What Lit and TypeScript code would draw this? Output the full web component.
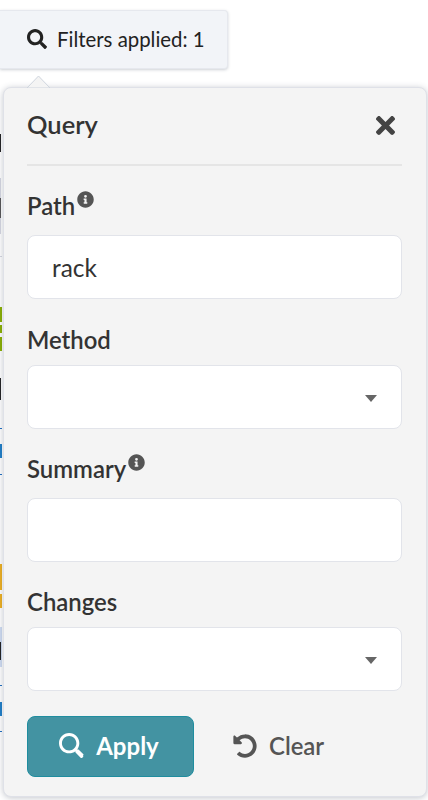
import { LitElement, html, css, svg } from "lit";
import { customElement } from "lit/decorators.js";

const strip: [number, number, string, number][] = [
  [134, 18, "#222", 1],
  [178, 56, "#d5d7e0", 1],
  [198, 20, "#555", 1],
  [256, 1, "#d5d7e0", 2],
  [307, 15, "#8ab000", 2],
  [325, 8, "#8ab000", 2],
  [337, 14, "#8ab000", 2],
  [378, 22, "#222", 1],
  [428, 1, "#1f6fc0", 2],
  [444, 14, "#1f7fc8", 2],
  [474, 1, "#1f6fc0", 2],
  [564, 26, "#eeb020", 2],
  [594, 14, "#eeb020", 2],
  [627, 40, "#cfdcf2", 2],
  [642, 18, "#222", 1],
  [685, 1, "#1f6fc0", 2],
  [702, 14, "#1f7fc8", 2],
  [731, 1, "#1f6fc0", 2],
];

const search = svg`<path d="M505 442.700L405.300 343c-4.500-4.500-10.600-7-17-7H372c27.600-35.300 44-79.700 44-128C416 93.100 322.900 0 208 0S0 93.100 0 208s93.100 208 208 208c48.300 0 92.700-16.400 128-44v16.300c0 6.400 2.500 12.500 7 17l99.700 99.700c9.400 9.400 24.600 9.400 33.900 0l28.300-28.300c9.400-9.400 9.400-24.600.1-34zM208 336c-70.700 0-128-57.200-128-128 0-70.700 57.200-128 128-128 70.700 0 128 57.200 128 128 0 70.700-57.200 128-128 128z"/>`;
const searchLight = svg`<path d="M505 442.700L405.300 343c-4.500-4.500-10.600-7-17-7H372c27.600-35.300 44-79.700 44-128C416 93.100 322.900 0 208 0S0 93.100 0 208s93.100 208 208 208c48.300 0 92.700-16.400 128-44v16.300c0 6.400 2.500 12.500 7 17l99.700 99.700c9.400 9.400 24.600 9.400 33.900 0l15-15c9.400-9.400 9.400-24.600.1-34zM208 356c-81.700 0-148-66.200-148-148 0-81.700 66.200-148 148-148 81.700 0 148 66.200 148 148 0 81.700-66.200 148-148 148z"/>`;

@customElement("app-root")
export class AppRoot extends LitElement {
  static styles = css`
    :host { display: block; position: relative; width: 428px; height: 800px; overflow: hidden; background: #fff; font-family: Lato, sans-serif; color: #333; }
    .strip { position: absolute; left: 0; }
    .trigger { width: 228px; height: 59px; margin-top: 10px; box-sizing: border-box; display: flex; align-items: center; gap: 10px; padding: 0 0 2px 27px; background: #f2f4f8; border-radius: 0 4px 4px 0; border: 1px solid #e6e8ee; border-left: 0; box-shadow: 0 1px 3px rgba(60,70,90,.25); font-size: 20.4px; color: #222; white-space: nowrap; }
    .trigger svg { width: 20px; height: 20px; fill: #222; flex: none; }
    .popover { position: absolute; left: 3px; top: 87px; width: 424px; height: 710px; box-sizing: border-box; padding: 0 24px 0 23px; background: #f4f4f4; border: 1px solid #dfe1e8; border-radius: 8px; box-shadow: 0 1px 6px rgba(60,70,90,.3); display: flex; flex-direction: column; }
    .caret { position: absolute; left: 23px; top: -13px; width: 23px; height: 13px; }
    .head { height: 78px; flex: none; display: flex; justify-content: space-between; align-items: center; box-sizing: border-box; border-bottom: 2px solid #e5e5e5; padding-bottom: 4px; font-size: 25.5px; font-weight: 600; color: #333; }
    .head svg { width: 19px; height: 19px; fill: #444; margin: 2px 7px 0 0; }
    .field { display: flex; flex-direction: column; flex: none; margin-top: 27px; }
    .field.tip { margin-top: 26px; }
    .field.first { margin-top: 26px; }
    .field.last { margin-top: 26px; }
    label { display: flex; font-size: 23.9px; font-weight: 600; color: #333; line-height: 28px; height: 39px; }
    .tip label { height: 43px; }
    label svg { width: 17px; height: 17px; margin: -1px 0 0 2px; fill: #555; }
    .box { height: 64px; box-sizing: border-box; background: #fff; border: 1px solid #e2e4ea; border-radius: 8px; display: flex; align-items: center; justify-content: space-between; padding: 0 24px; font-size: 24.4px; color: #333; }
    .arrow { width: 12px; height: 7px; margin-top: 3px; fill: #666; }
    .actions { display: flex; align-items: center; margin-top: 25px; }
    .apply { width: 167px; height: 61px; box-sizing: border-box; border-radius: 8px; background: #4393a2; border: 1px solid #1f8d9f; color: #fff; display: flex; align-items: center; justify-content: center; gap: 12px; padding: 0 3px 2px 0; font-size: 24px; font-weight: 700; }
    .apply svg { width: 25px; height: 25px; fill: #fff; }
    .clear { margin-left: 39px; display: flex; align-items: center; gap: 12px; color: #555; font-size: 23.9px; font-weight: 600; padding-bottom: 2px; }
    .clear svg { width: 24px; height: 24px; fill: #555; }
  `;

  private info() {
    return html`<svg viewBox="0 0 512 512" aria-hidden="true"><path d="M256 8C119 8 8 119 8 256s111 248 248 248 248-111 248-248S393 8 256 8zm0 110a42 42 0 1 1 0 84 42 42 0 0 1 0-84zm56 254c0 6.600-5.400 12-12 12h-88c-6.600 0-12-5.400-12-12v-24c0-6.600 5.400-12 12-12h12v-64h-12c-6.600 0-12-5.400-12-12v-24c0-6.600 5.400-12 12-12h64c6.600 0 12 5.400 12 12v100h12c6.600 0 12 5.400 12 12z"/></svg>`;
  }

  private field(name: string, cls: string, content: unknown) {
    return html`<div class="field ${cls}"><label>${name}${cls.includes("tip") ? this.info() : ""}</label>${content}</div>`;
  }

  render() {
    const arrow = html`<div class="box"><span></span><svg class="arrow" viewBox="0 0 12 7"><path d="M0 0h12L6 7z"/></svg></div>`;
    return html`
      ${strip.map(([t, h, c, w]) => html`<div class="strip" style="top:${t}px;height:${h}px;width:${w}px;background:${c}"></div>`)}
      <div class="trigger"><svg viewBox="0 0 512 512">${search}</svg><span>Filters applied: 1</span></div>
      <div class="popover">
        <svg class="caret" viewBox="0 0 23 13"><path d="M0 13L11.500 1 23 13z" fill="#f4f4f4" stroke="#cfd5de"/></svg>
        <div class="head"><span>Query</span>
          <svg viewBox="0 80 352 352"><path d="M242.720 256l100.070-100.070c12.280-12.280 12.280-32.190 0-44.480l-22.240-22.240c-12.280-12.280-32.190-12.280-44.480 0L176 189.280 75.930 89.210c-12.280-12.280-32.190-12.280-44.480 0L9.210 111.450c-12.280 12.280-12.280 32.190 0 44.480L109.280 256 9.210 356.070c-12.280 12.280-12.280 32.190 0 44.480l22.240 22.240c12.280 12.280 32.200 12.280 44.480 0L176 322.720l100.070 100.070c12.280 12.280 32.200 12.280 44.480 0l22.240-22.240c12.280-12.280 12.280-32.190 0-44.480L242.720 256z"/></svg>
        </div>
        ${this.field("Path", "tip first", html`<div class="box">rack</div>`)}
        ${this.field("Method", "", arrow)}
        ${this.field("Summary", "tip", html`<div class="box"></div>`)}
        ${this.field("Changes", "last", arrow)}
        <div class="actions">
          <div class="apply"><svg viewBox="0 0 512 512">${searchLight}</svg><span>Apply</span></div>
          <div class="clear">
            <svg viewBox="0 0 512 512"><path d="M255.500 8c-66.300.1-126.500 26.300-170.900 68.900L48.900 41.200C33.800 26.100 8 36.800 8 58.100V192c0 13.300 10.700 24 24 24h133.900c21.400 0 32.100-25.900 17-41l-41.700-41.700c30.800-28.800 70.700-44.800 113.100-45.200 92.400-.8 170.300 74 169.500 169.700C423.100 348.600 349.400 424 256 424c-41 0-79.700-14.600-110.200-41.400-4.700-4.200-11.900-3.900-16.400.6l-39.700 39.700c-4.900 4.900-4.600 12.800.5 17.400C134.200 479.400 192.200 504 256 504c137 0 248-111 248-248C504 119.200 392.300 7.800 255.500 8z"/></svg>
            <span>Clear</span>
          </div>
        </div>
      </div>
    `;
  }
}
